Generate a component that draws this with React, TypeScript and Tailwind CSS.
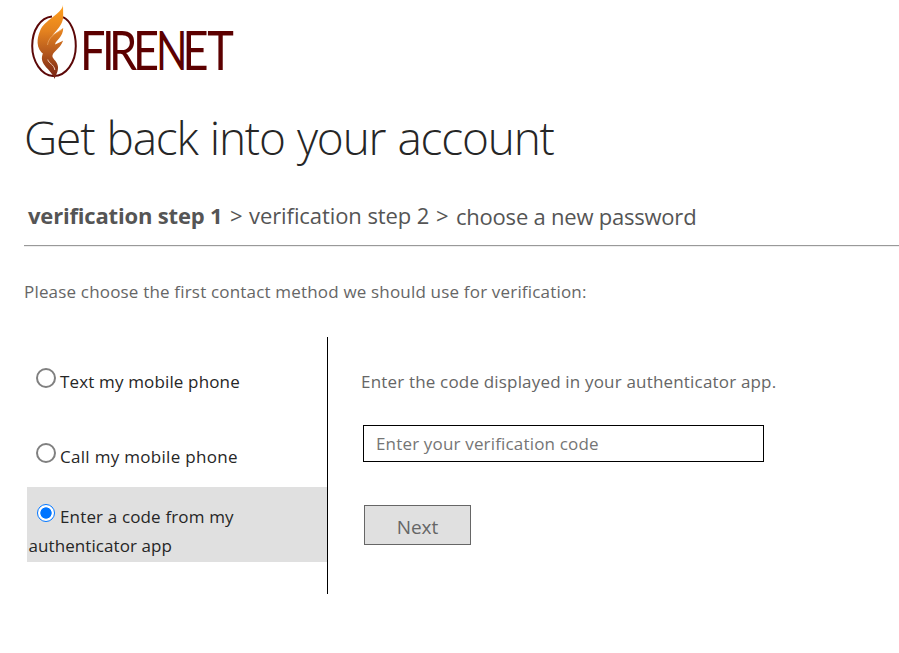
import { useState } from "react";

function Logo() {
  return (
    <svg width="216" height="84" viewBox="0 0 216 84" className="block" role="img" aria-label="Firenet">
      <defs>
        <linearGradient id="flame" gradientUnits="userSpaceOnUse" x1="0" y1="5" x2="0" y2="79">
          <stop offset="0" stopColor="#ff9f1c" />
          <stop offset="0.35" stopColor="#e4821f" />
          <stop offset="0.65" stopColor="#b4581e" />
          <stop offset="1" stopColor="#742012" />
        </linearGradient>
      </defs>
      <path d="M30 16.500C18.500 17.500 10.200 30 10.200 46C10.200 61.500 19.500 75.500 31 76C44 76.500 53.800 62.500 53.800 46C53.800 32 48.500 20.500 41 17.200" fill="none" stroke="#5c0808" strokeWidth="2" />
      <path d="M41 5C40 14 22 20 18 31C16.300 35 15.400 39 15.600 43C15.900 48 18 51.500 22 54.500C22.500 51 24 47 25.500 43C28.500 34 41.200 28 41.200 16Z" fill="url(#flame)" />
      <path d="M41.200 28C35 33 25 36 23.500 44C22.800 48 22 51 20.500 54.500C17 65 29 69 32.800 79C33.500 75 36.200 72.500 36 67C35.700 62 32 60 30.500 57C29.500 52 38 49.500 41.200 40.500C39 42 36 43 33 44.500C34 40 41.200 37 41.200 28Z" fill="url(#flame)" />
      <path d="M40 29.500C32 34 26.500 37.500 25.500 45" fill="none" stroke="#f6c48f" strokeWidth="0.500" />
      <path d="M25.800 59.500C26.500 63.500 32 64 32.800 70" fill="none" stroke="#f4d8c8" strokeWidth="0.900" />
      <g fill="#5c0000" fontFamily="Lato, sans-serif" fontSize="55">
        <text x="70.7 97.5 106 135.3" y="70" transform="scale(0.82 1)">
          FIRE
        </text>
        <text x="178.6" y="70" transform="scale(0.75 1)">
          N
        </text>
        <text x="195.6 225.9" y="70" transform="scale(0.82 1)">
          ET
        </text>
      </g>
    </svg>
  );
}

const radioBase = "m-0 shrink-0 appearance-none rounded-full bg-white";

function Radio({ checked, onChange }: { checked: boolean; onChange: () => void }) {
  return (
    <input
      type="radio"
      name="method"
      checked={checked}
      onChange={onChange}
      className={
        checked
          ? radioBase + " ml-2 mr-[5.5px] inline-block size-[18px] border-[1.5px] border-[#0075ff] bg-[radial-gradient(circle,#0075ff_5.3px,#ffffff_6px)]"
          : radioBase + " ml-[7px] mr-[4.5px] inline-block size-5 border-2 border-[#808080]"
      }
    />
  );
}

const methods = [
  { id: "text", lines: ["Text my mobile phone"], track: "tracking-[0.15px]" },
  { id: "call", lines: ["Call my mobile phone"], track: "tracking-[0.3px]" },
  { id: "app", lines: ["Enter a code from my", "authenticator app"], track: "tracking-[0.15px]" },
];

export default function App() {
  const [method, setMethod] = useState("app");
  const [code, setCode] = useState("");

  return (
    <main className="h-[653px] w-[899px] overflow-hidden bg-white font-['Open_Sans','Noto_Sans',sans-serif] text-[#666666]">
      <header className="h-[104px] pl-[22px]">
        <Logo />
      </header>
      <h1 className="h-[95px] whitespace-nowrap pl-6 text-[46px] leading-[66px] font-light tracking-[-1.2px] [word-spacing:1.4px] text-[#262626]">
        Get back into your account
      </h1>
      <nav className="ml-6 flex h-[46px] items-start whitespace-nowrap pl-1 text-[22px] leading-8 text-[#555555]">
        <span className="w-[202px] font-bold tracking-[-0.18px]">verification step 1</span>
        <span className="w-[19px]">&gt;</span>
        <span className="w-[187px] tracking-[-0.08px]">verification step 2</span>
        <span className="w-[20px]">&gt;</span>
        <span className="pt-px tracking-[-0.22px]">choose a new password</span>
      </nav>
      <hr className="ml-6 h-[2px] border-0 border-t border-[#999999] bg-[#eeeeee]" />
      <p className="ml-6 h-[90px] whitespace-nowrap pt-[31px] text-[17px] leading-[28px] tracking-[0.18px]">
        Please choose the first contact method we should use for verification:
      </p>
      <div className="ml-[27px] flex h-[257px]">
        <div className="flex w-[301px] flex-col border-r border-black text-[17px] text-[#262626]">
          {methods.map((m) => (
            <label
              key={m.id}
              className={
                m.id === "app"
                  ? "block h-[75px] bg-[#e0e0e0] pl-[1.5px] pt-[15px] leading-[29px]"
                  : "block h-[75px] pl-[1.5px] pt-[30px] leading-[29px]"
              }
            >
              <span className="flex h-[29px] items-start">
                <span className={m.id === "app" ? "flex pt-0.5" : "flex pt-px"}>
                  <Radio checked={method === m.id} onChange={() => setMethod(m.id)} />
                </span>
                <span className={"whitespace-nowrap " + m.track}>{m.lines[0]}</span>
              </span>
              {m.lines[1] && <span className="block whitespace-nowrap tracking-[0.08px]">{m.lines[1]}</span>}
            </label>
          ))}
        </div>
        <div className="pl-[33px] pt-[30px]">
          <p className="h-[58px] whitespace-nowrap text-[17px] leading-[29px] tracking-[0.18px]">
            Enter the code displayed in your authenticator app.
          </p>
          <input
            value={code}
            onChange={(e) => setCode(e.target.value)}
            placeholder="Enter your verification code"
            className="ml-[2px] block h-[37px] w-[401px] border border-black bg-white px-3 text-[17px] tracking-[0.17px] outline-none placeholder:text-[#757575]"
          />
          <button className="ml-[3px] mt-[43px] block h-[40px] w-[107px] border border-[#666666] bg-[#e0e0e0] pt-[3px] text-[19px] leading-[34px]">
            Next
          </button>
        </div>
      </div>
    </main>
  );
}
